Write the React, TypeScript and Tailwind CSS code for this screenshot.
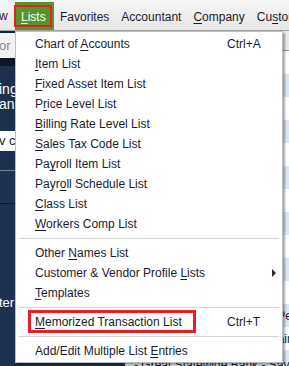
import type { ReactNode } from 'react';

type Item = { label: ReactNode; shortcut?: string; submenu?: boolean; marked?: boolean };

// underline the access key letter like a Windows menu
function K({ children }: { children: ReactNode }) {
  return <span className="underline decoration-1 underline-offset-[2px]">{children}</span>;
}

const groups: Item[][] = [
  [
    { label: <>Chart of <K>A</K>ccounts</>, shortcut: 'Ctrl+A' },
    { label: <><K>I</K>tem List</> },
    { label: <><K>F</K>ixed Asset Item List</> },
    { label: <>P<K>r</K>ice Level List</> },
    { label: <><K>B</K>illing Rate Level List</> },
    { label: <><K>S</K>ales Tax Code List</> },
    { label: <>Pa<K>y</K>roll Item List</> },
    { label: <>Payr<K>o</K>ll Schedule List</> },
    { label: <><K>C</K>lass List</> },
    { label: <><K>W</K>orkers Comp List</> },
  ],
  [
    { label: <>Other <K>N</K>ames List</> },
    { label: <>Customer &amp; Vendor Profile <K>L</K>ists</>, submenu: true },
    { label: <><K>T</K>emplates</> },
  ],
  [{ label: <><K>M</K>emorized Transaction List</>, shortcut: 'Ctrl+T', marked: true }],
  [{ label: <>Add/Edit Multiple List <K>E</K>ntries</> }],
];

function MenuBar() {
  return (
    <div className="flex h-[31px] shrink-0 items-end overflow-hidden border-b border-[#a3a3a3] bg-gradient-to-b from-[#f6f6f6] to-[#e6e6e6] text-[12px] text-[#1b1b2f]">
      <div className="flex h-[28px] w-[15px] shrink-0 items-center overflow-hidden">
        <span className="-ml-[1px]">w</span>
      </div>
      <div className="relative flex h-[28px] w-[39px] shrink-0 items-center bg-[#55962c] pl-[6px] pt-[1px] text-white">
        <span>
          <K>L</K>ists
        </span>
        <div className="absolute left-[-1px] top-[3px] h-[22px] w-[38px] border-2 border-[#ee1c24]" />
      </div>
      <div className="flex h-[28px] shrink-0 items-center whitespace-nowrap pt-[1px]">
        <span className="px-[6px]">Favorites</span>
        <span className="px-[6px]">Accountant</span>
        <span className="px-[6px]">
          <K>C</K>ompany
        </span>
        <span className="px-[6px]">
          Cu<K>s</K>tomers
        </span>
      </div>
    </div>
  );
}

function Sidebar() {
  return (
    <div className="flex w-[125px] shrink-0 flex-col text-[13px]">
      <div className="h-[2px] bg-[#13223a]" />
      <div className="flex h-[25px] items-center bg-[#f1f1f1] text-[#8a8a8a]">
        <span className="-ml-[1px]">or</span>
      </div>
      <div className="h-[8px] bg-[#0d192b]" />
      <div className="flex h-[65px] flex-col bg-[#1c2f4c] pt-[16px] text-[14px] leading-[15px] text-white">
        <span className="-ml-[1px]">ing</span>
        <span className="-ml-[1px]">an</span>
      </div>
      <div className="flex h-[20px] items-center bg-white text-[#222]">
        <span className="-ml-[1px]">v c</span>
      </div>
      <div className="h-[19px] bg-[#1c2f4c]" />
      <div className="h-px bg-[#7b8799]" />
      <div className="h-[32px] bg-[#1e3252]" />
      <div className="h-px bg-[#0c1829]" />
      <div className="flex flex-1 flex-col bg-[#1e3150] pt-[89px] text-white">
        <span className="-ml-[1px]">ter</span>
      </div>
    </div>
  );
}

function Register() {
  const rows = Array.from({ length: 14 }, (_, i) => i);
  return (
    <div className="flex flex-1 flex-col overflow-hidden bg-white text-[12px] text-[#1b1b2f]">
      <div className="h-[20px] shrink-0 border-b border-[#9c9c9c] bg-[#e9e9e9]" />
      {rows.map((i) => (
        <div
          key={i}
          className={`flex h-[23px] shrink-0 items-center whitespace-nowrap ${i % 2 === 1 ? 'bg-[#dce7f5]' : 'bg-white'}`}
        >
          {i === 11 && <span className="ml-auto -mr-[3px]">Pe</span>}
          {i === 12 && <span className="ml-auto -mr-[2px]">Fair</span>}
          {i === 13 && <span className="pl-[9px] pt-[6px]">- Great Statewide Bank - Savings</span>}
        </div>
      ))}
    </div>
  );
}

function ListsMenu() {
  return (
    <div className="absolute left-[15px] top-[31px] w-[268px] border border-[#bdbdbd] bg-white pb-px pt-[2px] text-[12px] text-[#1b1b2f] shadow-[2px_2px_2px_rgba(0,0,0,0.35)]">
      {groups.map((group, gi) => (
        <div key={gi}>
          {gi > 0 && (
            <div className="flex h-[9px] items-center px-[3px]">
              <div className="h-px w-full bg-[#d4d4d4]" />
            </div>
          )}
          {group.map((item, ii) => (
            <div key={ii} className="relative flex h-[20px] items-center whitespace-nowrap">
              <span className="w-[211px] pl-[19px]">{item.label}</span>
              <span className="w-[45px]">{item.shortcut}</span>
              {item.submenu && (
                <span className="h-0 w-0 border-y-[4px] border-l-[4px] border-y-transparent border-l-[#2a2a2a]" />
              )}
              {item.marked && (
                <div className="absolute left-[12px] top-[-2px] h-[23px] w-[168px] border-[3px] border-[#ee1c24]" />
              )}
            </div>
          ))}
        </div>
      ))}
    </div>
  );
}

export default function App() {
  return (
    <div className="relative flex h-[366px] w-[289px] flex-col overflow-hidden bg-white font-['Liberation_Sans',Arial,sans-serif]">
      <MenuBar />
      <div className="flex flex-1 overflow-hidden">
        <Sidebar />
        <Register />
      </div>
      <ListsMenu />
    </div>
  );
}
